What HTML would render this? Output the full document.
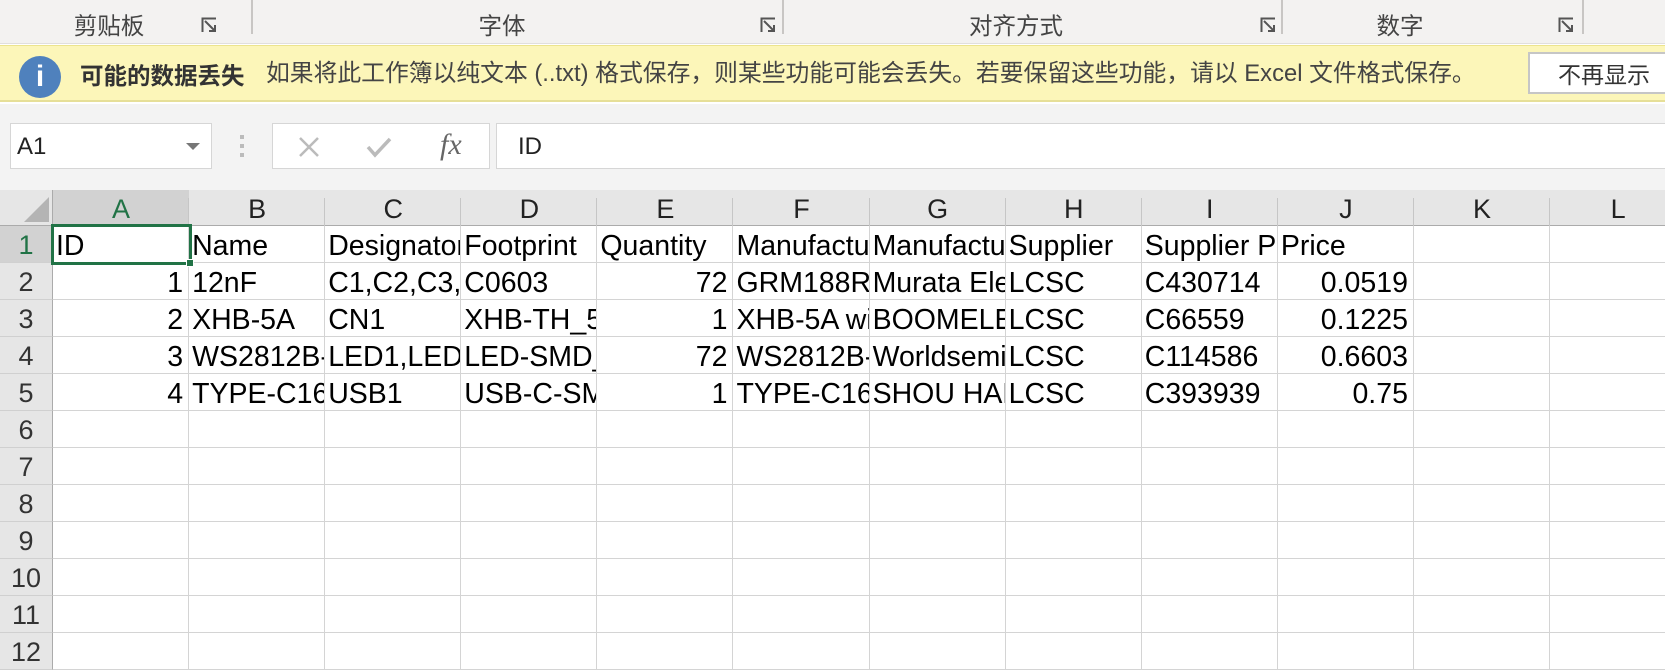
<!DOCTYPE html>
<html><head><meta charset="utf-8"><style>
*{margin:0;padding:0;box-sizing:border-box}
body{width:1665px;height:651px;overflow:hidden;background:#fff;font-family:"Liberation Sans","Noto Sans CJK SC",sans-serif;position:relative}
.abs{position:absolute}
.rib{left:0;top:0;width:1665px;height:44px;background:#f3f2f1;border-bottom:1px solid #e1dfdd}
.rl{top:9px;font-size:23.5px;color:#444;font-family:"Noto Sans CJK SC",sans-serif;transform:translateX(-50%);line-height:30px;white-space:nowrap}
.sep{top:0;width:2px;height:34px;background:#c8c6c4}
.dl{top:17px;width:16px;height:16px}
.info{left:0;top:45px;width:1665px;height:57px;background:#fcf6b9;border-top:1px solid #ece48e;border-bottom:2px solid #e6df98}
.gray{left:0;top:104px;width:1665px;height:86px;background:#f3f3f3}
.box{background:#fff;border:1px solid #d6d6d6}
.row{position:absolute;left:0;height:37px;display:flex}
.c{width:136.1px;flex:none;height:37px;border-right:1px solid #d4d4d4;border-bottom:1px solid #d4d4d4;font-size:28.5px;line-height:40px;white-space:nowrap;overflow:hidden;color:#000;padding-left:3px}
.r{text-align:right;padding-right:5px;padding-left:0}
.rh{width:53px;flex:none;height:37px;background:#e6e6e6;border-right:1px solid #ababab;border-bottom:1px solid #d0d0d0;font-size:27px;line-height:39px;text-align:center;color:#333}
.ch{width:136.1px;flex:none;height:36px;background:#e6e6e6;border-bottom:1px solid #ababab;font-size:27px;line-height:38px;text-align:center;color:#222;position:relative}
.ch:after{content:"";position:absolute;right:0;top:8px;width:1px;height:28px;background:#c6c6c6}
</style></head><body>
<div class="abs rib"></div>
<div class="abs rl" style="left:109px">剪贴板</div>
<svg class="abs dl" style="left:201px" viewBox="0 0 16 16"><path d="M1.5 15V1.5H15M4 4L14 14M14 8V14H8" fill="none" stroke="#555" stroke-width="2"/></svg>
<div class="abs sep" style="left:251px"></div>
<div class="abs rl" style="left:502px">字体</div>
<svg class="abs dl" style="left:760px" viewBox="0 0 16 16"><path d="M1.5 15V1.5H15M4 4L14 14M14 8V14H8" fill="none" stroke="#555" stroke-width="2"/></svg>
<div class="abs sep" style="left:782px"></div>
<div class="abs rl" style="left:1016px">对齐方式</div>
<svg class="abs dl" style="left:1260px" viewBox="0 0 16 16"><path d="M1.5 15V1.5H15M4 4L14 14M14 8V14H8" fill="none" stroke="#555" stroke-width="2"/></svg>
<div class="abs sep" style="left:1281px"></div>
<div class="abs rl" style="left:1400px">数字</div>
<svg class="abs dl" style="left:1558px" viewBox="0 0 16 16"><path d="M1.5 15V1.5H15M4 4L14 14M14 8V14H8" fill="none" stroke="#555" stroke-width="2"/></svg>
<div class="abs sep" style="left:1582px"></div>

<div class="abs info"></div>
<div class="abs" style="left:19px;top:56px;width:42px;height:42px;border-radius:50%;background:#4f81bd;color:#fff;font:bold 30px/42px 'Liberation Sans',sans-serif;text-align:center">i</div>
<div class="abs" style="left:80px;top:59px;font-size:23.5px;line-height:30px;color:#333;font-weight:bold;font-family:'Noto Sans CJK SC',sans-serif;white-space:nowrap">可能的数据丢失</div>
<div class="abs" style="left:266px;top:59px;font-size:23.8px;line-height:30px;color:#444;white-space:nowrap">如果将此工作簿以纯文本 (..txt) 格式保存，则某些功能可能会丢失。若要保留这些功能，请以 Excel 文件格式保存。</div>
<div class="abs box" style="left:1528px;top:52px;width:140px;height:42px;border:2px solid #c6c6c6;font-size:23px;line-height:38px;color:#333;padding-left:28px;font-family:'Noto Sans CJK SC',sans-serif;white-space:nowrap">不再显示</div>

<div class="abs gray"></div>
<div class="abs box" style="left:10px;top:123px;width:202px;height:46px;font-size:24px;line-height:46px;padding-left:6px;color:#222">A1</div>
<div class="abs" style="left:186px;top:143px;width:0;height:0;border-left:7px solid transparent;border-right:7px solid transparent;border-top:7px solid #777"></div>
<div class="abs" style="left:240px;top:135px;width:4px;height:22px;background:repeating-linear-gradient(#bbb 0 4px,transparent 4px 9px)"></div>
<div class="abs box" style="left:272px;top:123px;width:218px;height:46px"></div>
<svg class="abs" style="left:298px;top:136px" width="22" height="22" viewBox="0 0 22 22"><path d="M2 2L20 20M20 2L2 20" stroke="#bbb" stroke-width="2.5"/></svg>
<svg class="abs" style="left:366px;top:136px" width="26" height="22" viewBox="0 0 26 22"><path d="M2 11L9 19L24 3" fill="none" stroke="#bbb" stroke-width="3.5"/></svg>
<div class="abs" style="left:440px;top:130px;font:italic 30px/30px 'Liberation Serif',serif;color:#666">fx</div>
<div class="abs box" style="left:496px;top:123px;width:1180px;height:46px;font-size:24px;line-height:46px;padding-left:21px;color:#222">ID</div>

<div class="row" style="top:190px;height:36px">
<div style="width:53px;height:36px;background:#e6e6e6;border-bottom:1px solid #ababab;border-right:1px solid #ababab;position:relative"><div style="position:absolute;right:3px;bottom:3px;width:0;height:0;border-left:25px solid transparent;border-bottom:25px solid #b4b4b4"></div></div>
<div class="ch" style="background:#d2d2d2;color:#217346;border-bottom:2px solid #217346">A</div><div class="ch">B</div><div class="ch">C</div><div class="ch">D</div><div class="ch">E</div><div class="ch">F</div><div class="ch">G</div><div class="ch">H</div><div class="ch">I</div><div class="ch">J</div><div class="ch">K</div><div class="ch">L</div>
</div>

<div class="row" style="top:226px"><div class="rh" style="background:#d2d2d2;color:#217346">1</div><div class="c">ID</div><div class="c">Name</div><div class="c">Designator</div><div class="c">Footprint</div><div class="c">Quantity</div><div class="c">Manufacturer Part</div><div class="c">Manufacturer</div><div class="c">Supplier</div><div class="c">Supplier Part</div><div class="c">Price</div><div class="c"></div><div class="c"></div></div>
<div class="row" style="top:263px"><div class="rh">2</div><div class="c r">1</div><div class="c">12nF</div><div class="c">C1,C2,C3,C4</div><div class="c">C0603</div><div class="c r">72</div><div class="c">GRM188R71H</div><div class="c">Murata Electronics</div><div class="c">LCSC</div><div class="c">C430714</div><div class="c r">0.0519</div><div class="c"></div><div class="c"></div></div>
<div class="row" style="top:300px"><div class="rh">3</div><div class="c r">2</div><div class="c">XHB-5A</div><div class="c">CN1</div><div class="c">XHB-TH_5P</div><div class="c r">1</div><div class="c">XHB-5A with</div><div class="c">BOOMELE</div><div class="c">LCSC</div><div class="c">C66559</div><div class="c r">0.1225</div><div class="c"></div><div class="c"></div></div>
<div class="row" style="top:337px"><div class="rh">4</div><div class="c r">3</div><div class="c">WS2812B-B</div><div class="c">LED1,LED2,LED3</div><div class="c">LED-SMD_4P</div><div class="c r">72</div><div class="c">WS2812B-B</div><div class="c">Worldsemi</div><div class="c">LCSC</div><div class="c">C114586</div><div class="c r">0.6603</div><div class="c"></div><div class="c"></div></div>
<div class="row" style="top:374px"><div class="rh">5</div><div class="c r">4</div><div class="c">TYPE-C16PIN</div><div class="c">USB1</div><div class="c">USB-C-SMD</div><div class="c r">1</div><div class="c">TYPE-C16PIN</div><div class="c">SHOU HAN</div><div class="c">LCSC</div><div class="c">C393939</div><div class="c r">0.75</div><div class="c"></div><div class="c"></div></div>
<div class="row" style="top:411px"><div class="rh">6</div><div class="c"></div><div class="c"></div><div class="c"></div><div class="c"></div><div class="c"></div><div class="c"></div><div class="c"></div><div class="c"></div><div class="c"></div><div class="c"></div><div class="c"></div><div class="c"></div></div>
<div class="row" style="top:448px"><div class="rh">7</div><div class="c"></div><div class="c"></div><div class="c"></div><div class="c"></div><div class="c"></div><div class="c"></div><div class="c"></div><div class="c"></div><div class="c"></div><div class="c"></div><div class="c"></div><div class="c"></div></div>
<div class="row" style="top:485px"><div class="rh">8</div><div class="c"></div><div class="c"></div><div class="c"></div><div class="c"></div><div class="c"></div><div class="c"></div><div class="c"></div><div class="c"></div><div class="c"></div><div class="c"></div><div class="c"></div><div class="c"></div></div>
<div class="row" style="top:522px"><div class="rh">9</div><div class="c"></div><div class="c"></div><div class="c"></div><div class="c"></div><div class="c"></div><div class="c"></div><div class="c"></div><div class="c"></div><div class="c"></div><div class="c"></div><div class="c"></div><div class="c"></div></div>
<div class="row" style="top:559px"><div class="rh">10</div><div class="c"></div><div class="c"></div><div class="c"></div><div class="c"></div><div class="c"></div><div class="c"></div><div class="c"></div><div class="c"></div><div class="c"></div><div class="c"></div><div class="c"></div><div class="c"></div></div>
<div class="row" style="top:596px"><div class="rh">11</div><div class="c"></div><div class="c"></div><div class="c"></div><div class="c"></div><div class="c"></div><div class="c"></div><div class="c"></div><div class="c"></div><div class="c"></div><div class="c"></div><div class="c"></div><div class="c"></div></div>
<div class="row" style="top:633px"><div class="rh">12</div><div class="c"></div><div class="c"></div><div class="c"></div><div class="c"></div><div class="c"></div><div class="c"></div><div class="c"></div><div class="c"></div><div class="c"></div><div class="c"></div><div class="c"></div><div class="c"></div></div>

<div class="abs" style="left:51px;top:224px;width:141px;height:41px;border:3px solid #217346"></div>
<div class="abs" style="left:186px;top:259px;width:8px;height:8px;background:#217346;border:1px solid #fff"></div>
</body></html>
